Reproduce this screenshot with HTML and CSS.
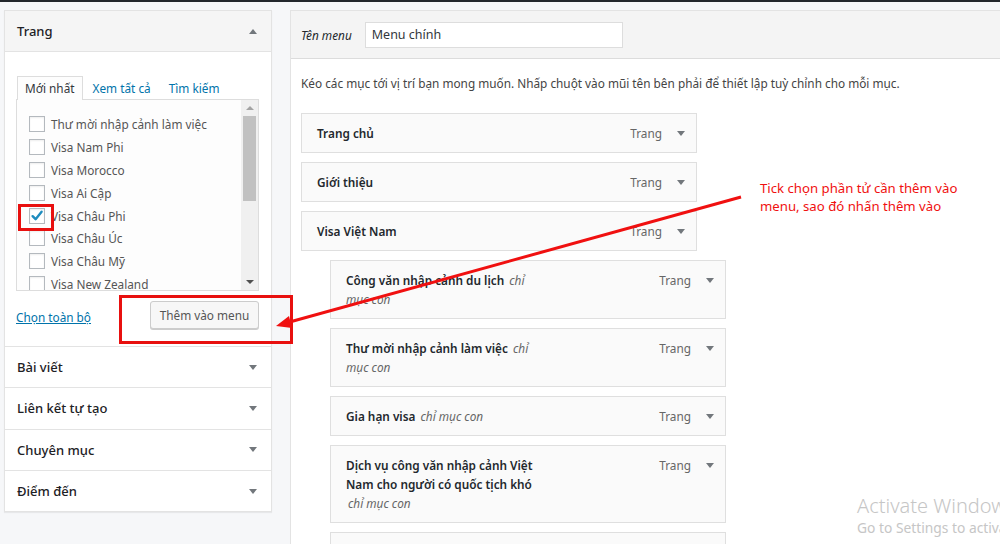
FILE: index.html
```html
<!DOCTYPE html>
<html lang="vi">
<head>
<meta charset="utf-8">
<title>Menu</title>
<link rel="stylesheet" href="styles.css">
</head>
<body>
<div class="topbar"></div>
<div class="page">
  <aside class="side">
    <section class="acc open">
      <h3 class="acc-title">Trang <span class="tri tri-up"></span></h3>
      <div class="acc-body">
        <ul class="tabs">
          <li class="tab active">Mới nhất</li>
          <li class="tab">Xem tất cả</li>
          <li class="tab">Tìm kiếm</li>
        </ul>
        <div class="tab-panel">
          <ul class="checklist">
            <li><span class="cb"></span>Thư mời nhập cảnh làm việc</li>
            <li><span class="cb"></span>Visa Nam Phi</li>
            <li><span class="cb"></span>Visa Morocco</li>
            <li><span class="cb"></span>Visa Ai Cập</li>
            <li><span class="cb checked"><svg viewBox="0 0 16 16" width="16" height="16"><path d="M3.6 8.2 L6.6 11.2 L12.6 3.8" fill="none" stroke="#1e8cbe" stroke-width="2.4" stroke-linecap="round" stroke-linejoin="round"/></svg></span>Visa Châu Phi</li>
            <li><span class="cb"></span>Visa Châu Úc</li>
            <li><span class="cb"></span>Visa Châu Mỹ</li>
            <li><span class="cb"></span>Visa New Zealand</li>
            <li><span class="cb"></span>Visa Châu Âu</li>
          </ul>
          <div class="scrollbar">
            <span class="sb-arrow sb-up"></span>
            <span class="sb-track"><span class="sb-thumb"></span></span>
            <span class="sb-arrow sb-down"></span>
          </div>
        </div>
        <div class="actions">
          <a class="select-all">Chọn toàn bộ</a>
          <span class="btn">Thêm vào menu</span>
        </div>
      </div>
    </section>
    <section class="acc"><h3 class="acc-title">Bài viết <span class="tri"></span></h3></section>
    <section class="acc"><h3 class="acc-title">Liên kết tự tạo <span class="tri"></span></h3></section>
    <section class="acc"><h3 class="acc-title">Chuyên mục <span class="tri"></span></h3></section>
    <section class="acc"><h3 class="acc-title">Điểm đến <span class="tri"></span></h3></section>
  </aside>

  <main class="editor">
    <div class="editor-head">
      <span class="name-label">Tên menu</span>
      <span class="name-input">Menu chính</span>
    </div>
    <div class="editor-body">
      <p class="hint">Kéo các mục tới vị trí bạn mong muốn. Nhấp chuột vào mũi tên bên phải để thiết lập tuỳ chỉnh cho mỗi mục.</p>
      <ul class="menu">
        <li class="item"><span class="title"><b>Trang chủ</b></span><span class="type">Trang</span><span class="tri"></span></li>
        <li class="item"><span class="title"><b>Giới thiệu</b></span><span class="type">Trang</span><span class="tri"></span></li>
        <li class="item"><span class="title"><b>Visa Việt Nam</b></span><span class="type">Trang</span><span class="tri"></span></li>
        <li class="item sub"><span class="title"><b>Công văn nhập cảnh du lịch</b> <i>chỉ mục con</i></span><span class="type">Trang</span><span class="tri"></span></li>
        <li class="item sub"><span class="title"><b>Thư mời nhập cảnh làm việc</b> <i>chỉ mục con</i></span><span class="type">Trang</span><span class="tri"></span></li>
        <li class="item sub"><span class="title"><b>Gia hạn visa</b> <i>chỉ mục con</i></span><span class="type">Trang</span><span class="tri"></span></li>
        <li class="item sub"><span class="title"><b>Dịch vụ công văn nhập cảnh Việt Nam cho người có quốc tịch khó</b> <i>chỉ mục con</i></span><span class="type">Trang</span><span class="tri"></span></li>
        <li class="item sub"><span class="title"><b>Visa du lịch</b></span><span class="type">Trang</span><span class="tri"></span></li>
      </ul>
    </div>
  </main>
</div>

<div class="mark mark-check"></div>
<div class="mark mark-button"></div>
<svg class="arrow" width="1000" height="544" viewBox="0 0 1000 544">
  <line x1="741" y1="197" x2="286" y2="323" stroke="#f01010" stroke-width="3"/>
  <polygon points="276,326 289,316 292,328" fill="#f01010"/>
</svg>
<p class="note">Tick chọn phần tử cần thêm vào<br>menu, sao đó nhấn thêm vào</p>
<div class="watermark">
  <div class="wm-1">Activate Windows</div>
  <div class="wm-2">Go to Settings to activate Windows.</div>
</div>
</body>
</html>
```

FILE: styles.css
```css
* { box-sizing: border-box; }
html, body { margin: 0; padding: 0; }
body {
  width: 1000px;
  height: 544px;
  overflow: hidden;
  position: relative;
  background: #f6f7f9;
  font-family: "Noto Sans", "Open Sans", sans-serif;
  font-size: 11.8px;
  color: #23282d;
}
ul { list-style: none; margin: 0; padding: 0; }
.topbar { height: 2px; background: #23282d; }

.page {
  display: flex;
  align-items: flex-start;
  gap: 18px;
  padding: 8px 0 0 4px;
}

/* ---------- left column ---------- */
.side {
  width: 268px;
  flex: none;
  background: #fff;
  border: 1px solid #e3e3e3;
  box-shadow: 0 1px 1px rgba(0,0,0,.06);
}
.acc + .acc { border-top: 1px solid #e3e3e3; }
.acc-title {
  margin: 0;
  height: 40.3px;
  padding: 0 14px 0 12px;
  display: flex;
  align-items: center;
  justify-content: space-between;
  font-size: 13px;
  font-weight: 500;
  color: #1d2125;
}
.acc.open .acc-title { background: #f5f5f5; border-bottom: 1px solid #e3e3e3; height: 41px; }
.tri {
  width: 0; height: 0;
  border-left: 4px solid transparent;
  border-right: 4px solid transparent;
  border-top: 5px solid #72777c;
}
.tri-up { border-top: 0; border-bottom: 5px solid #72777c; }

.acc-body { padding: 24px 12px 0 11px; }
.tabs { display: flex; margin-bottom: -1px; position: relative; z-index: 1; padding-left: 1px; }
.tab {
  height: 24px;
  line-height: 22px;
  padding: 0 8px;
  color: #0073aa;
  border: 1px solid transparent;
  border-bottom: 0;
}
.tab.active { color: #32373c; background: #fdfdfd; border-color: #ddd; padding: 0 7px; }
.tab:nth-child(2) { padding-left: 9px; }
.tab-panel {
  height: 192px;
  border: 1px solid #ddd;
  background: #fdfdfd;
  display: flex;
  overflow: hidden;
}
.checklist { flex: 1; padding: 13px 0 0 12px; color: #555; }
.checklist li { height: 22.8px; display: flex; align-items: center; gap: 6px; white-space: nowrap; }
.cb {
  width: 16px; height: 16px; flex: none;
  border: 1px solid #b4b9be;
  background: #fff;
  box-shadow: inset 0 1px 2px rgba(0,0,0,.07);
  display: flex;
}
.cb.checked svg { margin: -1px; }
.scrollbar {
  width: 17px; flex: none;
  background: #f0f0f0;
  display: flex; flex-direction: column; align-items: center;
}
.sb-arrow { height: 16px; width: 17px; display: flex; align-items: center; justify-content: center; }
.sb-up::before { content: ""; border-left: 4px solid transparent; border-right: 4px solid transparent; border-bottom: 4px solid #a3a3a3; }
.sb-down::before { content: ""; border-left: 4px solid transparent; border-right: 4px solid transparent; border-top: 4px solid #505050; }
.sb-track { flex: 1; width: 100%; display: flex; justify-content: center; }
.sb-thumb { width: 13px; height: 85px; background: #c1c1c1; }

.actions {
  display: flex;
  align-items: center;
  justify-content: space-between;
  padding: 10px 0 17px 0;
}
.select-all { color: #0073aa; text-decoration: underline; position: relative; top: 2px; }
.btn {
  width: 109px; height: 28px;
  display: flex; align-items: center; justify-content: center;
  border: 1px solid #ccc;
  border-radius: 3px;
  background: #f7f7f7;
  box-shadow: 0 1px 0 #ccc;
  color: #555;
}

/* ---------- editor ---------- */
.editor {
  width: 730px;
  flex: none;
  min-height: 560px;
  background: #fff;
  border: 1px solid #e3e3e3;
}
.editor-head {
  background: #f4f4f4;
  border-bottom: 1px solid #dcdcdc;
  display: flex;
  align-items: center;
  gap: 13px;
  padding: 11px 10px 10px;
}
.name-label { font-style: italic; color: #23282d; }
.name-input {
  width: 258px; height: 26px;
  border: 1px solid #ddd;
  background: #fff;
  padding: 0 6px;
  line-height: 24px;
  font-size: 12.5px;
  color: #32373c;
}
.editor-body { padding: 15px 10px 0; }
.hint { margin: 0 0 20px; line-height: 19px; color: #444; }
.item {
  width: 396px;
  border: 1px solid #dfdfdf;
  background: #fafafa;
  padding: 10px 11px 9px 15px;
  line-height: 19px;
  margin-bottom: 9px;
  display: flex;
  align-items: flex-start;
}
.item.sub { margin-left: 29px; }
.title { flex: 1; }
.sub .title { flex: none; width: 200px; margin-right: auto; }
.title b { font-weight: 600; color: #23282d; }
.title i { color: #666; font-weight: 400; margin-left: 2px; }
.type { color: #666; margin-right: 15px; }
.item .tri { margin-top: 7px; }

/* ---------- annotations ---------- */
.mark { position: absolute; border: 3px solid #e8100f; }
.mark-check { left: 18px; top: 204px; width: 36px; height: 27px; }
.mark-button { left: 119px; top: 295px; width: 174px; height: 49px; }
.arrow { position: absolute; left: 0; top: 0; }
.note {
  position: absolute;
  left: 760px; top: 179px;
  margin: 0;
  font-size: 13.2px;
  line-height: 18px;
  color: #f01010;
}
.watermark {
  position: absolute;
  left: 857px; top: 493px;
  white-space: nowrap;
  color: #c6c6c6;
}
.wm-1 { font-size: 20px; line-height: 25px; font-weight: 300; }
.wm-2 { font-size: 13.8px; line-height: 20px; }
```
